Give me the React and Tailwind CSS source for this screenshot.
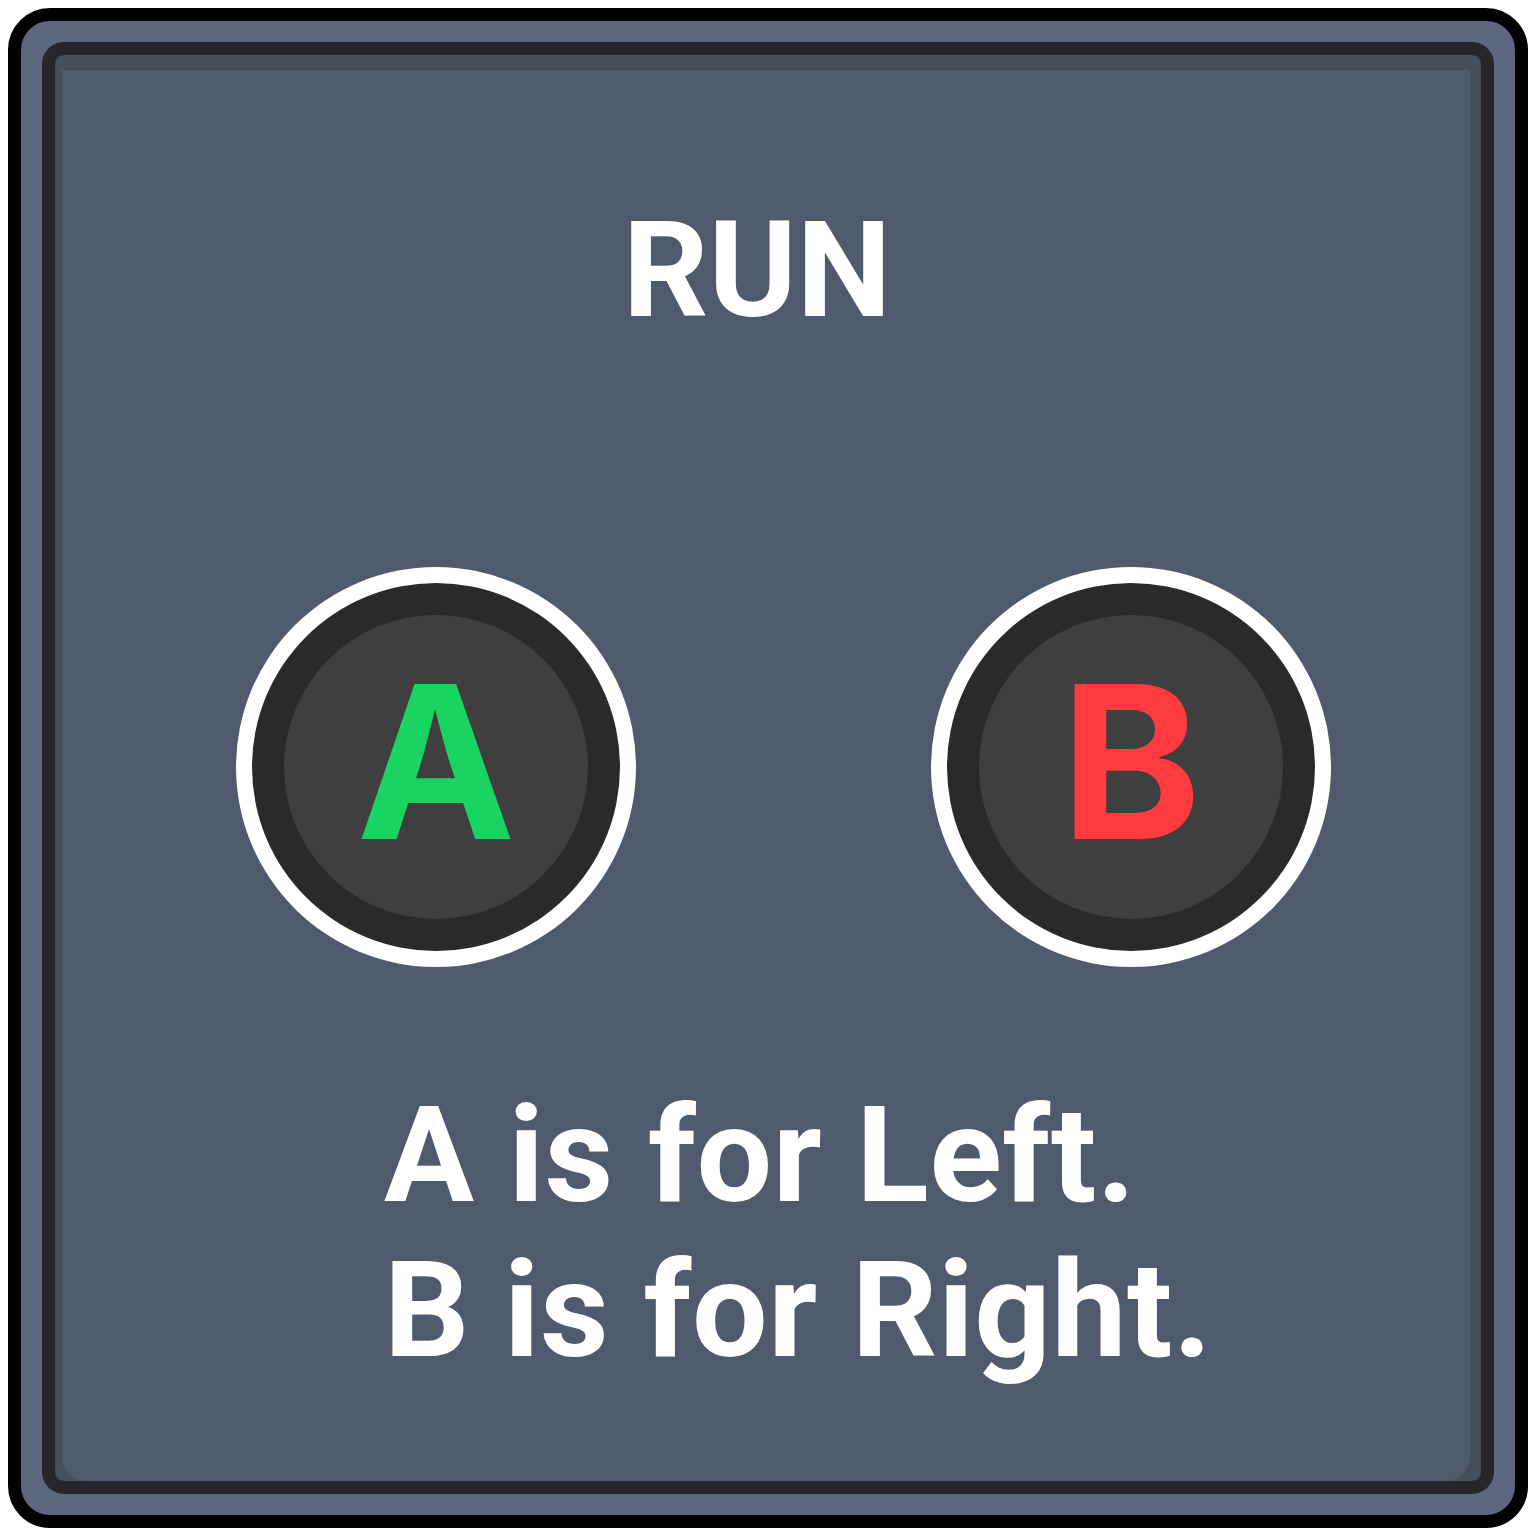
import React from "react";

const roboto = { fontFamily: "Roboto, 'Liberation Sans', sans-serif" };

function Button({ letter, color }) {
  return (
    <div className="w-[400px] h-[400px] rounded-full bg-white p-[16px]">
      <div className="w-full h-full rounded-full bg-[#2a2a2a] p-[32px]">
        <div className="w-full h-full rounded-full bg-[#3f3f3f] flex items-center justify-center pb-[11px]">
          <span
            className={`text-[213px] font-bold leading-none ${color}`}
            style={{ fontFamily: "Inter, 'DejaVu Sans', sans-serif" }}
          >
            {letter}
          </span>
        </div>
      </div>
    </div>
  );
}

export default function App() {
  return (
    <div className="min-h-screen bg-white p-2">
      <div className="w-[1520px] h-[1520px] rounded-[42px] border-[13px] border-black bg-[#5d6880] p-[21px]">
        <div className="h-full rounded-[22px] border-[13px] border-[#26272c] bg-[#474e5b] flex flex-col">
          <div className="flex-1 mt-[15px] ml-[7px] mr-[11px] rounded-b-[24px] bg-[#4f5a6c] flex flex-col">
            {/* title */}
            <div
              className="pt-[134px] pr-[18px] text-center text-white font-bold text-[134px] leading-none"
              style={roboto}
            >
              RUN
            </div>

            {/* buttons */}
            <div className="mt-[229px] flex pl-[174px] gap-[295px]">
              <Button letter="A" color="text-[#19d461]" />
              <Button letter="B" color="text-[#ff3b3f]" />
            </div>

            {/* help text */}
            <div
              className="mt-[111px] pl-[322px] text-white font-bold text-[134px] leading-[155px] tracking-[0.6px]"
              style={roboto}
            >
              <div>A is for Left.</div>
              <div>B is for Right.</div>
            </div>
          </div>
        </div>
      </div>
    </div>
  );
}
